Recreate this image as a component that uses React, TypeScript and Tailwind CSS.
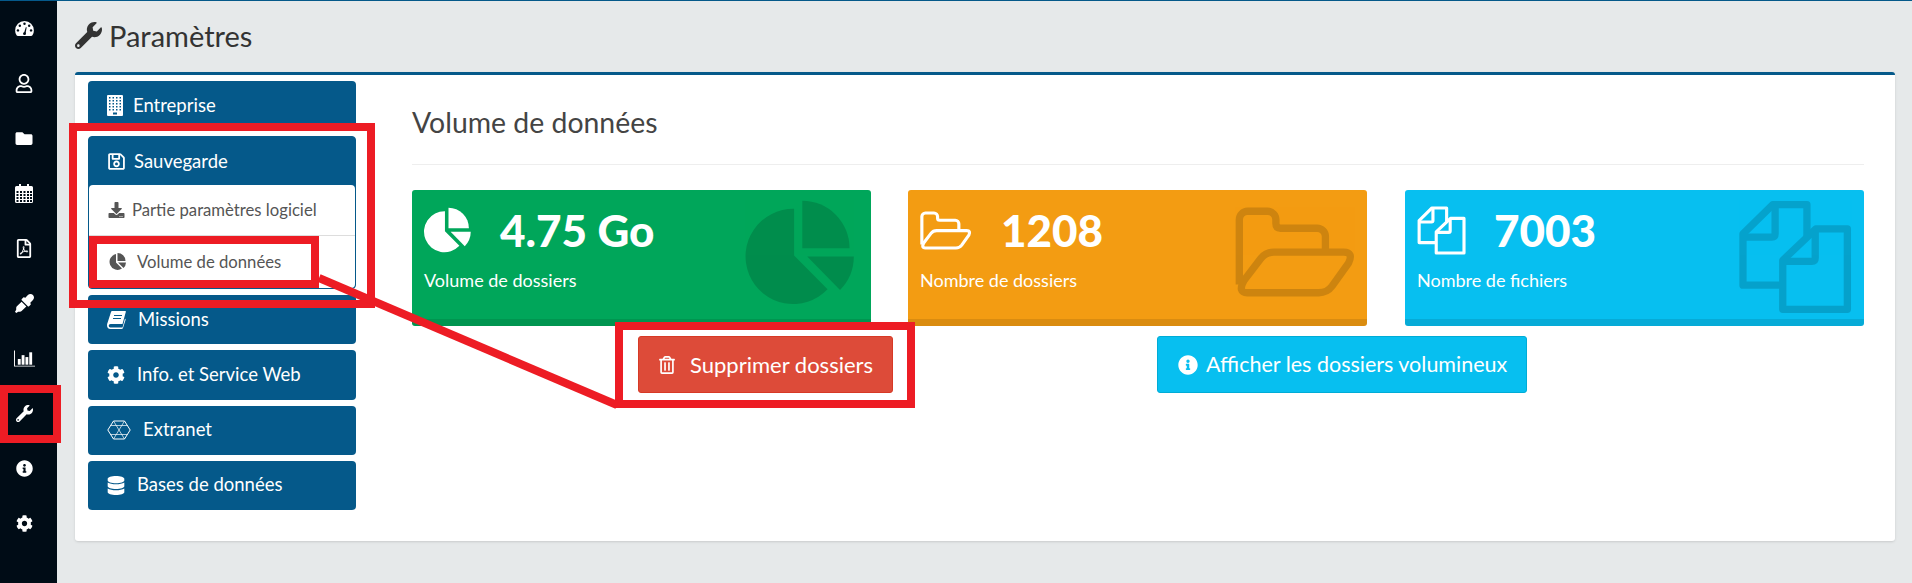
import type { ReactNode } from 'react';
import {
  FaRegUser, FaFolder, FaRegFilePdf, FaEyeDropper, FaWrench,
  FaInfoCircle, FaCog, FaRegSave, FaDownload, FaDatabase, FaRegTrashAlt,
} from 'react-icons/fa';

function GaugeIcon({ className }: { className?: string }) {
  return (
    <svg viewBox="0 0 20 16" className={className}>
      <path d="M0 10a10 10 0 0 1 20 0q0 3-1.500 5.200-.5.800-1.500.800H3q-1 0-1.500-.8Q0 13 0 10z" fill="currentColor" />
      <g fill="#000c16">
        <circle cx="3" cy="10" r="1.300" />
        <circle cx="5" cy="5" r="1.300" />
        <circle cx="10" cy="3" r="1.300" />
        <circle cx="15" cy="5" r="1.300" />
        <circle cx="17" cy="10" r="1.300" />
        <path d="M9 14 11.500 6.500l.8.300L11 14z" />
        <circle cx="10" cy="13.500" r="1.500" />
      </g>
    </svg>
  );
}

function CalendarIcon({ className }: { className?: string }) {
  return (
    <svg viewBox="0 0 18 19" className={className}>
      <path d="M1.500 2H4V0h2v2h6V0h2v2h2.500Q18 2 18 3.500v14q0 1.500-1.500 1.500h-15Q0 19 0 17.500v-14Q0 2 1.500 2z" fill="currentColor" />
      <g fill="#000c16">
        {[7, 10, 13, 16].map((y) =>
          [1.500, 5, 8.500, 12, 15].map((x) => <rect key={`${x}-${y}`} x={x} y={y} width="2" height="2" />),
        )}
      </g>
    </svg>
  );
}

function BarsIcon({ className }: { className?: string }) {
  return (
    <svg viewBox="0 0 22 17" className={className} fill="currentColor">
      <path d="M0 0h1v16h21v1H0z" />
      <rect x="4" y="9" width="3" height="6" />
      <rect x="8" y="5" width="3" height="10" />
      <rect x="12" y="7" width="3" height="8" />
      <rect x="16" y="2" width="3" height="13" />
    </svg>
  );
}

function PieIcon({ className }: { className?: string }) {
  return (
    <svg viewBox="1095 328 332 320" className={className} fill="currentColor">
      <path d="M1243 355V497L1345 600A145 145 0 1 1 1243 355Z" />
      <path d="M1268 330A145 145 0 0 1 1412 475H1268Z" />
      <path d="M1283 500H1425A145 145 0 0 1 1383 602Z" />
    </svg>
  );
}

function FolderOpenIcon({ className }: { className?: string }) {
  return (
    <svg viewBox="1033 113 364 269" className={className} fill="none" stroke="currentColor" strokeWidth="22" strokeLinejoin="round">
      <path d="M1046 345V150a25 25 0 0 1 25-25h60a25 25 0 0 1 25 25v12q0 14 14 14h110a25 25 0 0 1 25 25v47" />
      <path d="M1070 370h215q25 0 40-20l50-70q15-32-15-32h-210q-25 0-40 20l-50 65q-20 37 10 37z" />
    </svg>
  );
}

function FilesIcon({ className }: { className?: string }) {
  return (
    <svg viewBox="1045 88 344 344" className={className} fill="none" stroke="currentColor" strokeWidth="22" strokeLinejoin="round">
      <path d="M1175 345H1060V190l90-88h103v95" />
      <path d="M1157 104v86q0 10-10 10h-87" />
      <path d="M1280 175h95v243h-195V270z" />
      <path d="M1278 178v85q0 10-10 10h-87" />
    </svg>
  );
}

function BuildingIcon({ className }: { className?: string }) {
  return (
    <svg viewBox="0 0 16 21" className={className}>
      <rect width="16" height="21" rx="1" fill="currentColor" />
      <g fill="#05598a">
        {[2, 5, 8, 11, 14].map((y) =>
          [2, 5.500, 9, 12.500].map((x) => <rect key={`${x}-${y}`} x={x} y={y} width="1.500" height="1.500" />),
        )}
        <rect x="6" y="17.500" width="4" height="2" />
      </g>
    </svg>
  );
}

function BookIcon({ className }: { className?: string }) {
  return (
    <svg viewBox="0 0 19 18" className={className}>
      <path d="M5 0H18.500Q19 0 18.800 1L15.500 13H3.500Q1.700 13 1.700 14.800T3.500 16.500H15.500L18 7.500 18.700 8.500 16 17q-.3 1-1.500 1H3.500Q0 18 0 14 0 13 .8 11L4 1Q4.300 0 5 0z" fill="currentColor" />
      <path d="M7 4.500h8M6 7.500h8" stroke="#05598a" strokeWidth="1.200" />
    </svg>
  );
}

function HexIcon({ className }: { className?: string }) {
  return (
    <svg viewBox="0 0 24 20" className={className} fill="none" stroke="currentColor" strokeWidth="1">
      <path d="M.8 10 6.500 1h11l5.700 9-5.700 9h-11z" />
      <path d="M6.500 1 17.500 19M17.500 1 6.500 19M3.500 5.500h17M3.500 14.500h17" strokeWidth="0.700" />
    </svg>
  );
}

const sideIcons: ReactNode[] = [
  <GaugeIcon className="h-[15px] w-[19px]" />,
  <FaRegUser className="h-[19px] w-[18px]" />,
  <FaFolder className="h-[17px] w-[18px]" />,
  <CalendarIcon className="h-[19px] w-[18px]" />,
  <FaRegFilePdf className="h-[19px] w-[16px]" />,
  <FaEyeDropper className="h-[19px] w-[19px]" />,
  <BarsIcon className="h-[17px] w-[21px]" />,
  <FaWrench className="h-[17px] w-[17px]" />,
  <FaInfoCircle className="h-[17px] w-[17px]" />,
  <FaCog className="h-[17px] w-[17px]" />,
];

function MenuButton({ icon, label, gap }: { icon: ReactNode; label: string; gap: string }) {
  return (
    <div className={`flex h-[49.200px] items-center rounded-[4px] bg-[#05598a] pl-[19px] text-[18.500px] text-white ${gap}`}>
      {icon}
      <span>{label}</span>
    </div>
  );
}

function StatBox({
  bg, value, label, icon, bigIcon, valueGap,
}: {
  bg: string; value: string; label: string; icon: ReactNode; bigIcon: ReactNode; valueGap: string;
}) {
  return (
    <div className={`relative h-[136px] w-[459px] overflow-hidden rounded-[3px] text-white ${bg}`}>
      <div className={`flex h-[78px] items-center pt-[2px] pl-[12px] ${valueGap}`}>
        {icon}
        <span className="text-[44px] leading-none font-black">{value}</span>
      </div>
      <p className="pl-[12px] text-[18px] leading-[24px]">{label}</p>
      <div className="absolute inset-x-0 bottom-0 h-[7px] bg-black/10" />
      {bigIcon}
    </div>
  );
}

export default function App() {
  return (
    <div className="relative flex h-[583px] w-[1912px] overflow-hidden border-t border-[#05598a] bg-[#e6e9ea] font-['Lato','Noto_Sans',sans-serif] text-[#444]">
      <aside className="flex w-[57px] flex-col bg-[#000c16] text-white">
        {sideIcons.map((icon, i) => (
          <div key={i} className="flex h-[55px] w-[48px] shrink-0 items-center justify-center">
            {icon}
          </div>
        ))}
      </aside>

      <main className="flex-1 pl-[18px]">
        <div className="flex h-[71px] items-center gap-[7px] pb-[2px] text-[#333]">
          <FaWrench className="h-[27px] w-[27px]" />
          <h1 className="text-[29px] font-normal">Paramètres</h1>
        </div>

        <section className="flex h-[469px] w-[1820px] rounded-[3px] border-t-[3px] border-[#05598a] bg-white pt-[6px] pl-[13px] shadow-sm">
          <nav className="flex w-[268px] flex-col gap-[6px]">
            <MenuButton icon={<BuildingIcon className="h-[21px] w-[16px]" />} label="Entreprise" gap="gap-[10px]" />
            <div className="rounded-[4px] border border-[#05598a] bg-[#05598a]">
              <div className="flex h-[48px] items-center gap-[8px] pt-[1px] pl-[18px] text-[18.500px] text-white">
                <FaRegSave className="h-[19px] w-[19px]" />
                <span>Sauvegarde</span>
              </div>
              <div className="rounded-[4px] bg-white text-[16.700px] text-[#555]">
                <div className="flex h-[51px] items-center gap-[7px] border-b border-[#ddd] pl-[19px]">
                  <FaDownload className="h-[16px] w-[17px]" />
                  <span>Partie paramètres logiciel</span>
                </div>
                <div className="flex h-[52px] items-center gap-[11px] pl-[19px]">
                  <svg viewBox="0 0 18 18" className="h-[18px] w-[18px]" fill="currentColor">
                    <path d="M8 1v8.500l6 6A8 8 0 1 1 8 1z" />
                    <path d="M9.500 0a8 8 0 0 1 8 8h-8zM10 9.500h8a8 8 0 0 1-2.500 5.500z" />
                  </svg>
                  <span>Volume de données</span>
                </div>
              </div>
            </div>
            <MenuButton icon={<BookIcon className="h-[18px] w-[19px]" />} label="Missions" gap="gap-[12px]" />
            <MenuButton icon={<FaCog className="h-[18px] w-[18px]" />} label="Info. et Service Web" gap="gap-[12px]" />
            <MenuButton icon={<HexIcon className="h-[20px] w-[24px]" />} label="Extranet" gap="gap-[12px]" />
            <MenuButton icon={<FaDatabase className="h-[19px] w-[18px]" />} label="Bases de données" gap="gap-[12px]" />
          </nav>

          <div className="ml-[56px] w-[1452px]">
            <h2 className="flex h-[84px] items-center border-b border-[#eee] pb-[1px] text-[28.400px] font-normal text-[#444]">
              Volume de données
            </h2>
            <div className="mt-[25px] flex gap-[37px]">
              <StatBox
                bg="bg-[#00a65a]"
                value="4.75 Go"
                label="Volume de dossiers"
                valueGap="gap-[29px]"
                icon={<PieIcon className="h-[46px] w-[47px]" />}
                bigIcon={<PieIcon className="absolute top-[10px] right-[16px] h-[105px] w-[110px] text-black opacity-15" />}
              />
              <StatBox
                bg="bg-[#f39c12]"
                value="1208"
                label="Nombre de dossiers"
                valueGap="gap-[29px]"
                icon={<FolderOpenIcon className="h-[39px] w-[52px]" />}
                bigIcon={<FolderOpenIcon className="absolute top-[17px] right-[11px] h-[90px] w-[121px] text-black opacity-15" />}
              />
              <div className="ml-[1px]">
                <StatBox
                  bg="bg-[#07bff0]"
                  value="7003"
                  label="Nombre de fichiers"
                  valueGap="gap-[28px]"
                  icon={<FilesIcon className="h-[49px] w-[49px]" />}
                  bigIcon={<FilesIcon className="absolute top-[10px] right-[12px] h-[114px] w-[114px] text-black opacity-15" />}
                />
              </div>
            </div>
            <div className="mt-[10px] flex">
              <button className="ml-[226px] flex h-[57px] w-[255px] items-center gap-[15px] rounded-[3px] border border-[#d73925] bg-[#dd4b39] pl-[20px] text-[22px] text-white">
                <FaRegTrashAlt className="h-[18px] w-[16px]" />
                Supprimer dossiers
              </button>
              <button className="ml-[264px] flex h-[57px] w-[370px] items-center gap-[8px] rounded-[3px] border border-[#00acd6] bg-[#07bff0] pl-[20px] text-[21.500px] text-white">
                <FaInfoCircle className="h-[20px] w-[20px]" />
                Afficher les dossiers volumineux
              </button>
            </div>
          </div>
        </section>
      </main>

      {/* loading bar at the very top */}
      <div className="absolute top-[-1px] left-[1114px] h-[1px] w-[170px] bg-[#e74c3c]" />

      {/* red annotations drawn on top of the screenshot */}
      <div className="absolute top-[122px] left-[69px] h-[185px] w-[306px] border-8 border-[#ed1c24]" />
      <div className="absolute top-[235px] left-[89px] h-[52px] w-[230px] border-8 border-[#ed1c24]" />
      <div className="absolute top-[384px] left-0 h-[58px] w-[61px] border-8 border-[#ed1c24]" />
      <div className="absolute top-[321px] left-[615px] h-[86px] w-[300px] border-8 border-[#ed1c24]" />
      <svg className="absolute top-0 left-0 h-[583px] w-[1912px]" viewBox="0 0 1912 583" fill="none">
        <path d="M319 277 617 404" stroke="#ed1c24" strokeWidth="8" />
      </svg>
    </div>
  );
}
